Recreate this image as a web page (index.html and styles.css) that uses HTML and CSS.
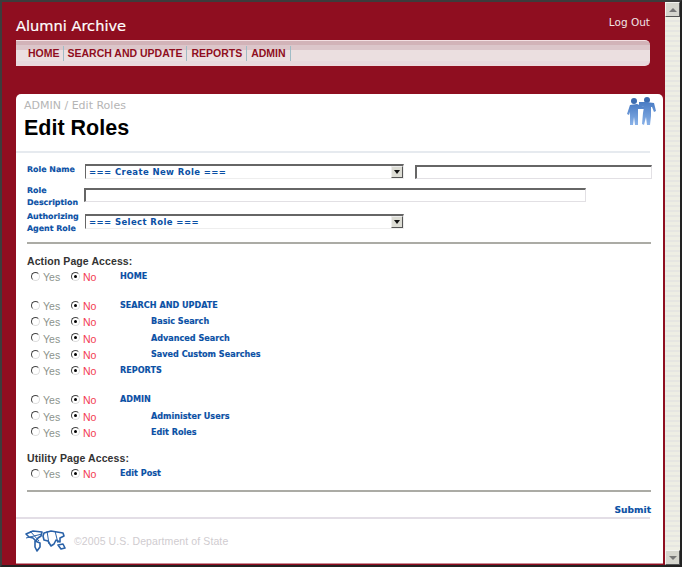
FILE: index.html
```html
<!DOCTYPE html>
<html lang="en">
<head>
    <meta charset="UTF-8">
    <title>Alumni Archive</title>
    <link rel="stylesheet" href="styles.css">
</head>
<body>
    <div class="window">
        <div class="page">
            <header class="top">
                <div class="brand">Alumni Archive</div>
                <a class="logout" href="#">Log Out</a>
            </header>
            <nav class="nav">
                <a href="#">HOME</a>
                <a href="#">SEARCH AND UPDATE</a>
                <a href="#">REPORTS</a>
                <a href="#">ADMIN</a>
            </nav>

            <main class="panel">
                <div class="title-row">
                    <div>
                        <div class="crumbs">ADMIN / Edit Roles</div>
                        <h1>Edit Roles</h1>
                    </div>
                    <svg class="people" width="30" height="30" viewBox="0 0 30 30">
                        <defs>
                            <linearGradient id="blue" x1="0" y1="0" x2="0" y2="1">
                                <stop offset="0" stop-color="#4a7cc4"/>
                                <stop offset="1" stop-color="#8ab2e8"/>
                            </linearGradient>
                        </defs>
                        <circle cx="7" cy="4" r="3" fill="#3c6cb0"/>
                        <path d="M3 8 L10 7 L17 10 L17 12 L11 12 L11 28 L8 28 L7 20 L6 28 L3 28 L3 15 L2 18 L0 17 Z" fill="url(#blue)"/>
                        <circle cx="20" cy="3" r="3" fill="#3c6cb0"/>
                        <path d="M12 5 L19 5 L27 6 L29 14 L27 15 L25 10 L24 10 L24 19 L23 28 L20 28 L19 20 L17 28 L15 27 L16 16 L17 10 L12 9 Z" fill="url(#blue)"/>
                    </svg>
                </div>

                <form class="form">
                    <div class="field field-first">
                        <label class="field-label">Role Name</label>
                        <div class="select-box">
                            <select><option>=== Create New Role ===</option></select>
                            <span class="select-btn"></span>
                        </div>
                        <input class="text-input input-name" type="text">
                    </div>
                    <div class="field field-desc">
                        <label class="field-label">Role Description</label>
                        <input class="text-input input-desc" type="text">
                    </div>
                    <div class="field field-agent">
                        <label class="field-label">Authorizing Agent Role</label>
                        <div class="select-box">
                            <select><option>=== Select Role ===</option></select>
                            <span class="select-btn"></span>
                        </div>
                    </div>

                    <hr class="rule rule-first">

                    <h2 class="access-title">Action Page Access:</h2>
                    <div class="access-row"><span class="radio"></span><span class="yes">Yes</span><span class="radio on"></span><span class="no">No</span><a href="#">HOME</a></div>
                    <div class="spacer"></div>
                    <div class="access-row"><span class="radio"></span><span class="yes">Yes</span><span class="radio on"></span><span class="no">No</span><a href="#">SEARCH AND UPDATE</a></div>
                    <div class="access-row"><span class="radio"></span><span class="yes">Yes</span><span class="radio on"></span><span class="no">No</span><a class="child" href="#">Basic Search</a></div>
                    <div class="access-row"><span class="radio"></span><span class="yes">Yes</span><span class="radio on"></span><span class="no">No</span><a class="child" href="#">Advanced Search</a></div>
                    <div class="access-row"><span class="radio"></span><span class="yes">Yes</span><span class="radio on"></span><span class="no">No</span><a class="child" href="#">Saved Custom Searches</a></div>
                    <div class="access-row"><span class="radio"></span><span class="yes">Yes</span><span class="radio on"></span><span class="no">No</span><a href="#">REPORTS</a></div>
                    <div class="spacer"></div>
                    <div class="access-row"><span class="radio"></span><span class="yes">Yes</span><span class="radio on"></span><span class="no">No</span><a href="#">ADMIN</a></div>
                    <div class="access-row"><span class="radio"></span><span class="yes">Yes</span><span class="radio on"></span><span class="no">No</span><a class="child" href="#">Administer Users</a></div>
                    <div class="access-row"><span class="radio"></span><span class="yes">Yes</span><span class="radio on"></span><span class="no">No</span><a class="child" href="#">Edit Roles</a></div>

                    <h2 class="access-title access-utility">Utility Page Access:</h2>
                    <div class="access-row"><span class="radio"></span><span class="yes">Yes</span><span class="radio on"></span><span class="no">No</span><a href="#">Edit Post</a></div>

                    <hr class="rule rule-last">
                    <div class="submit-row"><a href="#">Submit</a></div>
                </form>

                <footer class="footer">
                    <svg class="globe" width="42" height="22" viewBox="0 0 42 22">
                        <g fill="#fff" stroke="#2a62a8" stroke-width="1.6" stroke-linejoin="round">
                            <path d="M1 4 L8 1 L17 2 L16 6 L13 8 L11 11 L8 8 L4 7 Z"/>
                            <path d="M10 11 L15 13 L15 17 L12 21 L10 17 Z"/>
                            <path d="M19 3 L26 1 L38 3 L39 6 L35 8 L35 12 L31 10 L29 14 L26 16 L23 11 L19 10 L18 6 Z"/>
                            <path d="M33 15 L38 14 L40 18 L36 19 Z"/>
                        </g>
                        <path d="M5 1 L14 11 M1 8 L17 4 M22 1 L24 14 M30 1 L33 13" stroke="#2a62a8" fill="none"/>
                    </svg>
                    <span class="copyright">©2005 U.S. Department of State</span>
                </footer>
            </main>
        </div>

        <div class="scrollbar">
            <span class="scroll-btn"><i class="arrow-up"></i></span>
            <span class="scroll-btn"><i class="arrow-down"></i></span>
        </div>
    </div>
</body>
</html>
```

FILE: styles.css
```css
/* General Styles */
html, body {
    margin: 0;
    height: 100%;
    overflow: hidden;
}

body {
    font-family: 'DejaVu Sans', Verdana, sans-serif;
    background: #fff;
}

a {
    text-decoration: none;
}

.window {
    display: flex;
    width: 682px;
    height: 567px;
    box-sizing: border-box;
    border: 2px solid #3c3c3c;
    border-right-color: #222;
    border-bottom-color: #222;
}

.page {
    flex: 1;
    min-width: 0;
    box-sizing: border-box;
    background: #8f0e20;
    padding: 0 2px 1px 14px;
    display: flex;
    flex-direction: column;
}

/* Header */
.top {
    display: flex;
    justify-content: space-between;
    height: 38px;
    color: #fff;
}

.brand {
    font-size: 14.6px;
    line-height: 16px;
    padding-top: 16px;
    -webkit-text-stroke: 0.2px #fff;
}

.logout {
    color: #f1e4e6;
    font-size: 10.5px;
    line-height: 14px;
    padding: 13px 13px 0 0;
}

.nav {
    display: flex;
    align-items: center;
    height: 26px;
    margin-right: 13px;
    padding-left: 8px;
    box-sizing: border-box;
    border-top: 1px solid #f3dfe2;
    border-bottom: 1px solid #f0d8dc;
    border-radius: 0 5px 5px 0;
    background: linear-gradient(#d2b3b8 0, #d2b3b8 4px, #dcc6ca 4px, #dcc6ca 9px, #ebdfe0 9px, #ebdfe0 20px, #e8d9dd 20px);
}

.nav a {
    color: #8f0e20;
    font-family: 'Liberation Sans', Arial, sans-serif;
    font-size: 10.5px;
    font-weight: bold;
    line-height: 15px;
    margin-top: 1px;
    padding: 0 4px;
    border-right: 1px solid #9fbcc6;
}

.nav a:first-child {
    padding-right: 3px;
}

/* Panel */
.panel {
    flex: 1;
    margin-top: 28px;
    background: #fff;
    border-radius: 5px 5px 0 0;
    display: flex;
    flex-direction: column;
    border-bottom: 1px solid #c98d96;
}

.title-row {
    display: flex;
    justify-content: space-between;
    height: 59px;
    padding: 5px 0 0 8px;
    box-sizing: border-box;
    border-bottom: 2px solid #e6eaef;
    margin-right: 13px;
}

.crumbs {
    color: #b5b5b5;
    font-size: 11px;
    line-height: 13px;
}

h1 {
    margin: 4px 0 0;
    color: #000;
    font-family: 'Liberation Sans', Arial, sans-serif;
    font-size: 21.5px;
    line-height: 24px;
}

.people {
    margin: -2px -7px 0 0;
}

/* Form */
.form {
    padding: 0 11px;
}

.field {
    display: flex;
    align-items: flex-start;
}

.field-first {
    height: 35px;
    padding-top: 11px;
    box-sizing: border-box;
}

.field-desc {
    height: 26px;
}

.field-agent {
    height: 28px;
}

.field-label {
    width: 58px;
    margin-top: -3px;
    color: #0a50a5;
    font-size: 7.9px;
    font-weight: bold;
    line-height: 11.5px;
    -webkit-text-stroke: 0.15px #0a50a5;
}

.field-first .field-label {
    margin-top: 0;
}

.select-box {
    display: flex;
    width: 319px;
    height: 15px;
    box-sizing: border-box;
    border: 1px solid #666;
    border-top-width: 2px;
    border-right-color: #eee;
    border-bottom-color: #eee;
    background: #fff;
}

.select-box select {
    flex: 1;
    min-width: 0;
    appearance: none;
    border: 0;
    padding: 0 0 0 3px;
    margin: 0;
    background: #fff;
    color: #0a50a5;
    font-family: 'DejaVu Sans', Verdana, sans-serif;
    font-size: 8.5px;
    font-weight: bold;
    letter-spacing: 0.4px;
    height: 12px;
    line-height: 12px;
}

.select-btn {
    width: 12px;
    height: 12px;
    box-sizing: border-box;
    background: #dcdcd4;
    border-right: 1px solid #555;
    border-bottom: 1px solid #555;
    border-top: 1px solid #eee;
    border-left: 1px solid #eee;
    position: relative;
}

.select-btn::after {
    content: "";
    position: absolute;
    left: 2px;
    top: 3px;
    border: 3px solid transparent;
    border-top: 4px solid #111;
    border-bottom: 0;
}

.text-input {
    height: 14px;
    padding: 0;
    margin: 0;
    box-sizing: border-box;
    background: #fff;
    border: 1px solid #e2e0e4;
    border-top: 2px solid #666;
    border-left: 2px solid #666;
}

.input-name {
    width: 237px;
    margin-left: 11px;
    margin-top: 1px;
}

.input-desc {
    width: 502px;
    margin-left: -1px;
}

.rule {
    margin: 0;
    border: 0;
    height: 2px;
    background: #ababa5;
}

.rule-first {
    width: 624px;
}

.access-title {
    margin: 0;
    color: #333;
    font-family: 'Liberation Sans', Arial, sans-serif;
    font-size: 10.5px;
    font-weight: bold;
    letter-spacing: 0.1px;
    line-height: 13px;
    padding: 11px 0 1px;
}

.access-row {
    display: flex;
    align-items: center;
    height: 16.3px;
    padding-left: 4px;
    font-size: 9px;
}

.spacer {
    height: 12.7px;
}

.radio {
    width: 9px;
    height: 9px;
    box-sizing: border-box;
    border: 1px solid #888;
    border-top-color: #444;
    border-left-color: #444;
    border-right-color: #ddd;
    border-bottom-color: #ddd;
    border-radius: 50%;
    background: #fff;
    position: relative;
    top: -1px;
}

.radio.on::after {
    content: "";
    position: absolute;
    left: 2px;
    top: 2px;
    width: 3px;
    height: 3px;
    border-radius: 50%;
    background: #000;
}

.yes {
    width: 28px;
    margin-left: 3px;
    color: #8b938b;
    font-family: 'Liberation Sans', Arial, sans-serif;
    font-size: 10.5px;
}

.no {
    width: 37px;
    margin-left: 3px;
    color: #f23a52;
    font-family: 'Liberation Sans', Arial, sans-serif;
    font-size: 10.5px;
}

.access-row a {
    color: #0a50a5;
    font-size: 8.1px;
    font-weight: bold;
    position: relative;
    top: -1px;
    -webkit-text-stroke: 0.15px #0a50a5;
}

.access-row a.child {
    margin-left: 31px;
}

.access-utility {
    padding: 10.5px 0 1.5px;
}

.rule-last {
    width: 624px;
    margin-top: 8px;
}

.submit-row {
    width: 624px;
    text-align: right;
    padding-top: 6px;
    height: 14px;
}

.submit-row a {
    color: #0a50a5;
    font-size: 9.1px;
    font-weight: bold;
    line-height: 14px;
    -webkit-text-stroke: 0.15px #0a50a5;
}

/* Footer */
.footer {
    flex: 1;
    margin-top: 5px;
    margin-right: 13px;
    border-top: 2px solid #e3dee6;
    display: flex;
    align-items: center;
    padding-left: 9px;
    gap: 7px;
}

.copyright {
    color: #d0ccd0;
    font-family: 'Liberation Sans', Arial, sans-serif;
    font-size: 10.5px;
    letter-spacing: 0.1px;
}

/* Scrollbar */
.scrollbar {
    width: 15px;
    flex: none;
    display: flex;
    flex-direction: column;
    justify-content: space-between;
    background: repeating-linear-gradient(#eeeee4 0, #eeeee4 3px, #e6e6e2 3px, #e6e6e2 5px);
}

.scroll-btn {
    width: 15px;
    height: 15px;
    box-sizing: border-box;
    background: #d6d6ce;
    border: 1px solid #f4f4f0;
    border-right-color: #555;
    border-bottom-color: #555;
    display: flex;
    align-items: center;
    justify-content: center;
}

.arrow-up {
    border: 4px solid transparent;
    border-bottom: 4px solid #777;
    border-top: 0;
}

.arrow-down {
    border: 4px solid transparent;
    border-top: 4px solid #777;
    border-bottom: 0;
}
```
